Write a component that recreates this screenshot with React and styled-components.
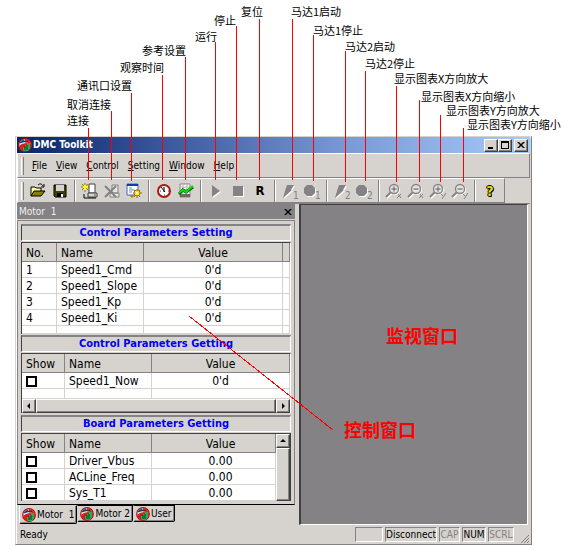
import React from "react";
import styled, { createGlobalStyle, css } from "styled-components";

const face = "#d6d3ce";
const shade = "#848284";
const ui = `"DejaVu Sans Condensed", "Noto Sans", sans-serif`;
const cjk = `"Noto Sans CJK SC", sans-serif`;

const GlobalStyle = createGlobalStyle`
  *, *::before, *::after { box-sizing: border-box; }
  body { margin: 0; background: #fff; font-family: ${ui}; color: #000; }
  button { font: inherit; color: inherit; }
`;

const raised = css`
  border: 1px solid;
  border-color: #fff #424142 #424142 #fff;
  box-shadow: inset -1px -1px 0 ${shade};
`;

const Figure = styled.div`
  position: relative;
  padding: 136px 32px 5px 15px;
`;

const Leaders = styled.svg`
  position: absolute;
  left: 0;
  top: 0;
  width: 100%;
  height: 100%;
  pointer-events: none;
  stroke: #f00;
  shape-rendering: crispEdges;
`;

const Callout = styled.span`
  position: absolute;
  left: ${(p) => p.$x}px;
  top: ${(p) => p.$y}px;
  white-space: nowrap;
  font-family: ${cjk};
  font-size: ${(p) => (p.$big ? 18 : 11)}px;
  line-height: ${(p) => (p.$big ? 20 : 12)}px;
  font-weight: ${(p) => (p.$big ? 700 : 400)};
  color: ${(p) => (p.$big ? "#f00" : "#000")};
`;

const Window = styled.main`
  background: ${face};
  border: 1px solid;
  border-color: ${face} ${shade} ${shade} ${face};
  box-shadow: inset 1px 1px 0 #fff;
  padding: 0 1px 0 1px;
`;

const TitleBar = styled.header`
  display: flex;
  align-items: center;
  height: 16px;
  padding: 0 2px 0 1px;
  gap: 1px;
  background: linear-gradient(90deg, #08246b, #7b9ad6 65%, #a5cbf7);
`;

const Title = styled.h1`
  flex: 1;
  margin: 0;
  font-size: 10px;
  line-height: 16px;
  font-weight: 700;
  color: #fff;
`;

const CaptionButtons = styled.div`
  display: flex;
`;

const CaptionButton = styled.button`
  ${raised}
  width: 14px;
  height: 13px;
  padding: 0;
  margin-left: ${(p) => (p.$apart ? 2 : 0)}px;
  background: ${face};
  display: grid;
  place-items: center;
`;

const Bar = styled.div`
  display: flex;
  align-items: center;
  height: ${(p) => p.$height}px;
  padding-left: 3px;
  border: 1px solid;
  border-color: #fff ${shade} ${shade} #fff;
`;

const Grip = styled.span`
  width: 3px;
  height: 18px;
  margin-right: ${(p) => p.$after}px;
  border-left: 1px solid #fff;
  border-right: 1px solid ${shade};
`;

const Menu = styled.nav`
  display: flex;
  gap: 9px;
`;

const MenuItem = styled.button`
  border: 0;
  padding: 0;
  background: none;
  font-size: 10px;
  line-height: 16px;
`;

const ToolbarRow = styled.div`
  display: flex;
  padding-right: 25px;
  border-bottom: 1px solid ${shade};
  & > * { flex: 1; }
`;

const Tool = styled.button`
  width: 22px;
  height: 22px;
  padding: 0;
  border: 0;
  background: none;
  display: grid;
  place-items: center;
`;

const Separator = styled.span`
  width: 2px;
  height: 22px;
  margin: 0 3px;
  border-left: 1px solid ${shade};
  border-right: 1px solid #fff;
`;

const Workspace = styled.div`
  display: flex;
  padding-right: 2px;
`;

const Pane = styled.section`
  flex: 0 0 282px;
  padding-right: 4px;
  display: flex;
  flex-direction: column;
`;

const PaneTitle = styled.header`
  display: flex;
  align-items: center;
  justify-content: space-between;
  height: 15px;
  padding: 0 2px;
  background: ${shade};
  color: #efefef;
  font-size: 10px;
  line-height: 15px;
`;

const PaneClose = styled.button`
  width: 10px;
  height: 10px;
  padding: 0;
  border: 0;
  background: none;
  color: #000;
  display: grid;
  place-items: center;
`;

const Groups = styled.div`
  margin-top: 1px;
  padding: 3px 3px 3px 3px;
  display: flex;
  flex-direction: column;
  gap: 1px;
  border: 1px solid;
  border-color: ${shade} ${shade} #000 ${shade};
`;

const GroupTitle = styled.h2`
  height: 17px;
  margin: 0;
  border: 1px solid;
  border-top-width: 2px;
  border-color: ${shade} #fff #fff #424142;
  text-align: center;
  font-size: 11px;
  line-height: 14px;
  font-weight: 700;
  color: #0000f7;
`;

const Sheet = styled.div`
  display: flex;
  flex-direction: ${(p) => (p.$row ? "row" : "column")};
  margin-bottom: ${(p) => p.$after || 0}px;
  border-top: 1px solid #424142;
  border-left: 1px solid #424142;
  border-right: 1px solid ${(p) => (p.$row ? "#424142" : "#fff")};
  background: #fff;
`;

const Grid = styled.table`
  flex: 1;
  width: 100%;
  table-layout: fixed;
  border-collapse: separate;
  border-spacing: 0;
  font-size: 12px;
  line-height: 13px;
`;

const Col = styled.col`
  width: ${(p) => (p.$w ? `${p.$w}px` : "auto")};
`;

const Head = styled.th`
  height: 19px;
  padding: 2px 4px 0 ${(p) => (p.$shift ? 18 : 4)}px;
  background: ${face};
  border-right: 1px solid ${shade};
  border-bottom: 1px solid ${shade};
  font-weight: 400;
  text-align: ${(p) => (p.$center ? "center" : "left")};
`;

const Cell = styled.td`
  height: ${(p) => p.$h || 16}px;
  padding: ${(p) => (p.$h ? 0 : 2)}px 4px 0 ${(p) => (p.$shift ? 18 : 4)}px;
  border-right: 1px solid ${face};
  border-bottom: 1px solid ${face};
  white-space: nowrap;
  text-align: ${(p) => (p.$center ? "center" : "left")};
`;

const Check = styled.input`
  appearance: none;
  display: block;
  width: 11px;
  height: 11px;
  margin: 0;
  border: 2px solid #000;
  background: #fff;
`;

const Scroll = styled.div`
  display: flex;
  flex-direction: ${(p) => (p.$vertical ? "column" : "row")};
  flex: 0 0 14px;
  background: #efebe7;
`;

const ScrollButton = styled.button`
  ${raised}
  flex: 0 0 14px;
  height: 14px;
  padding: 0;
  background: ${face};
  display: grid;
  place-items: center;
`;

const Thumb = styled.span`
  ${raised}
  flex: 1;
  background: ${face};
`;

const Tabs = styled.div`
  display: flex;
  align-items: flex-start;
  height: 20px;
  padding-left: 2px;
`;

const Tab = styled.button`
  display: flex;
  align-items: center;
  gap: 1px;
  height: ${(p) => (p.$active ? 19 : 17)}px;
  padding: 0 2px;
  border: 1px solid #000;
  border-top-color: ${(p) => (p.$active ? face : "#000")};
  border-left-color: ${(p) => (p.$active ? "#fff" : face)};
  border-radius: 0 0 2px 2px;
  box-shadow: inset -1px -1px 0 ${shade};
  background: ${face};
  font-size: 10px;
  line-height: 14px;
  white-space: pre;
`;

const Monitor = styled.section`
  flex: 1;
  background: ${shade};
  border: 1px solid;
  border-color: #424142 #fff #fff #424142;
  border-left-width: 2px;
`;

const StatusBar = styled.footer`
  display: flex;
  align-items: center;
  gap: 2px;
  height: 19px;
  padding-left: 3px;
  font-size: 10px;
  line-height: 13px;
`;

const Ready = styled.span`
  flex: 1;
`;

const StatusCell = styled.span`
  width: ${(p) => p.$w}px;
  height: 15px;
  border: 1px solid;
  border-color: ${shade} #fff #fff ${shade};
  text-align: center;
  white-space: nowrap;
  color: ${(p) => (p.$off ? shade : "#000")};
`;

const SizeGrip = styled.svg`
  align-self: flex-end;
  margin-left: 4px;
`;

const leaders = [
  [88, 128, 180], [111, 111, 180], [131, 93, 181], [162, 75, 180],
  [185, 57, 180], [215, 42, 180], [236, 26, 180], [259, 19, 180],
  [292, 19, 180], [313, 35, 181], [345, 51, 182], [365, 71, 181],
  [396, 86, 182], [419, 100, 182], [440, 115, 182], [463, 128, 182],
];

const callouts = [
  ["连接", 67, 114], ["取消连接", 67, 98], ["通讯口设置", 77, 79],
  ["观察时间", 120, 61], ["参考设置", 142, 44], ["运行", 195, 30],
  ["停止", 214, 14], ["复位", 241, 5], ["马达1启动", 291, 5],
  ["马达1停止", 313, 24], ["马达2启动", 345, 40], ["马达2停止", 365, 57],
  ["显示图表X方向放大", 394, 72], ["显示图表X方向缩小", 421, 90],
  ["显示图表Y方向放大", 446, 104], ["显示图表Y方向缩小", 467, 118],
];

const Logo = ({ size = 14 }) => (
  <svg width={size} height={size} viewBox="0 0 14 14" aria-hidden="true">
    <circle cx="7" cy="7" r="6.3" fill="#d8e8f0" stroke="#b01010" strokeWidth="1.2" />
    <path d="M2 5A6 6 0 0 1 6 1L7 4 4 5z" fill="#2878d8" />
    <path d="M7 1A6 6 0 0 1 13 7L10 5 7 4z" fill="#e02020" />
    <path d="M1 8L4 6 8 5 13 6V9L10 13H4z" fill="#e01818" />
    <path d="M5 12V9h2V7h2V5h3v5l-2 3H6z" fill="#20b058" />
    <path d="M2 5l3-2 3 1 2-1M7 8v4M9 7v5" stroke="#083820" fill="none" />
  </svg>
);

const Icon = ({ children }) => (
  <svg width="20" height="20" viewBox="0 0 20 20" fill="none" aria-hidden="true">{children}</svg>
);

const OpenIcon = () => (
  <Icon>
    <path d="M3 15V6h4l1 1h5v3" fill="#ffff9c" stroke="#000" />
    <path d="M3 15l3-5h11l-4 5z" fill="#848200" stroke="#000" />
    <path d="M10 4c2-2 4-1 5 1M16 3v3h-3" stroke="#000" />
  </Icon>
);
const SaveIcon = () => (
  <Icon>
    <path d="M4 4h12v12H5l-1-1z" fill="#424100" stroke="#000" />
    <path d="M6 4h8v6H6z" fill="#d6d3ce" />
    <path d="M7 12h6v4H7z" fill="#000" /><path d="M11 13h2v3h-2z" fill="#fff" />
  </Icon>
);
const ConnectIcon = () => (
  <Icon>
    <path d="M9 3h6v9H9z" fill="#fff" stroke="#424142" />
    <path d="M8 12h9v4H8z" fill="#d6d3ce" stroke="#424142" />
    <path d="M14 14h2" stroke="#00a000" />
    <path d="M4 13v4h12" stroke="#000" />
    <path d="M5 2v9M1 6h9M2 3l6 6M8 3L2 9" stroke="#848200" />
    <path d="M5 4v5M3 6h5" stroke="#ffff00" strokeWidth="2" />
  </Icon>
);
const DisconnectIcon = () => (
  <Icon>
    <path d="M10 4h6v8h-6zM8 12h9v4H8z" fill="#e8e6e2" stroke="#848284" />
    <path d="M3 5l11 11M14 5L3 16" stroke="#848284" strokeWidth="2" />
  </Icon>
);
const PortIcon = () => (
  <Icon>
    <path d="M3 3h11v11H3z" fill="#fff" stroke="#4264c8" />
    <path d="M3 4h11" stroke="#1038b8" strokeWidth="2" />
    <path d="M5 7h3M5 9h6M5 11h3" stroke="#6b86d0" />
    <path d="M13 8v9M9 12h9M10 9l6 7M16 9l-6 7" stroke="#9a7800" />
    <circle cx="13" cy="12" r="3" fill="#ffe030" stroke="#9a7800" />
    <circle cx="13" cy="12" r="1" fill="#fff" />
    <path d="M8 14v3M6 15h4" stroke="#9a7800" />
  </Icon>
);
const ClockIcon = () => (
  <Icon>
    <circle cx="10" cy="10" r="6" fill="#fff" stroke="#a51818" strokeWidth="2" />
    <path d="M7 6l4 5M10 6v5" stroke="#000" />
    <path d="M10 14h1M6 10h1M14 10h1" stroke="#424142" />
  </Icon>
);
const ChartIcon = () => (
  <Icon>
    <path d="M4 3h10v13H4z" fill="#fff" stroke="#848284" />
    <path d="M4 6h10M4 9h10M7 3v13M11 3v13" stroke="#b5b2ad" />
    <path d="M4 13h10v3H4z" fill="#6b6963" />
    <path d="M3 13l4-4 3 2 7-5" stroke="#084808" strokeWidth="3" />
    <path d="M3 12l4-3 3 2 7-6" stroke="#00e800" strokeWidth="2" />
  </Icon>
);
const PlayIcon = () => (
  <Icon><path d="M7 5l8 6-8 6z" fill="#fff" /><path d="M6 4l8 6-8 6z" fill={shade} /></Icon>
);
const StopIcon = () => (
  <Icon><path d="M6 6h10v10H6z" fill="#fff" /><path d="M5 5h10v10H5z" fill={shade} /></Icon>
);

const ToolLetter = styled.span`
  font-size: 13px;
  line-height: 20px;
  font-weight: 700;
`;

const HelpMark = styled(ToolLetter)`
  font-size: 14px;
  color: #e8e000;
  text-shadow: 1px 0 #000, -1px 0 #000, 0 1px #000, 0 -1px #000, 1px 1px #000;
`;

const Digit = styled.text`
  font-family: ${ui};
  font-size: 10px;
  fill: ${shade};
`;

const BoltIcon = ({ n }) => (
  <Icon>
    <path d="M8 5h7l-3 5h1L4 18l2-7 2-6z" fill="#fff" />
    <path d="M7 4h7l-3 5h1L3 17l2-7 2-6z" fill={shade} />
    <Digit x="13" y="18">{n}</Digit>
  </Icon>
);
const MotorIcon = ({ n }) => (
  <Icon>
    <path d="M6 5h5l3 3v5l-3 3H6l-3-3V8z" fill="#fff" />
    <path d="M5 4h5l3 3v5l-3 3H5l-3-3V7z" fill={shade} />
    <Digit x="13" y="18">{n}</Digit>
  </Icon>
);
const ZoomIcon = ({ plus, axis }) => (
  <Icon>
    <g stroke="#fff"><circle cx="11" cy="9" r="4.5" /><path d="M8 12l-5 5" strokeWidth="2" /></g>
    <g stroke={shade}>
      <circle cx="10" cy="8" r="4.5" fill="#e4e2de" strokeWidth="1.3" />
      <path d="M7 11l-5 5" strokeWidth="2" />
      <path d={plus ? "M7.5 8h5M10 5.5v5" : "M7.5 8h5"} strokeWidth="1.5" />
      <path d={axis === "x" ? "M14 13l3 4M17 13l-4 4" : "M13 13l2 2M18 12l-4 6"} />
    </g>
  </Icon>
);

const Arrow = ({ d }) => (
  <svg width="8" height="8" viewBox="0 0 8 8" aria-hidden="true"><path d={d} fill="#000" /></svg>
);

const tools = [
  [["Open", <OpenIcon />], ["Save", <SaveIcon />]],
  [["Connect", <ConnectIcon />], ["Disconnect", <DisconnectIcon />], ["Port settings", <PortIcon />]],
  [["Watch time", <ClockIcon />], ["Reference settings", <ChartIcon />]],
  [["Run", <PlayIcon />], ["Stop", <StopIcon />], ["Reset", <ToolLetter>R</ToolLetter>]],
  [["Start motor 1", <BoltIcon n="1" />], ["Stop motor 1", <MotorIcon n="1" />]],
  [["Start motor 2", <BoltIcon n="2" />], ["Stop motor 2", <MotorIcon n="2" />]],
  [
    ["Zoom in X", <ZoomIcon plus axis="x" />], ["Zoom out X", <ZoomIcon axis="x" />],
    ["Zoom in Y", <ZoomIcon plus axis="y" />], ["Zoom out Y", <ZoomIcon axis="y" />],
  ],
  [["Help", <HelpMark>?</HelpMark>]],
];

const menus = ["File", "View", "Control", "Setting", "Window", "Help"];

const SettingTable = () => (
  <Grid>
    <colgroup><Col $w={35} /><Col $w={87} /><Col /><Col $w={7} /></colgroup>
    <thead>
      <tr><Head>No.</Head><Head>Name</Head><Head $center>Value</Head><Head as="td" /></tr>
    </thead>
    <tbody>
      {["Speed1_Cmd", "Speed1_Slope", "Speed1_Kp", "Speed1_Ki"].map((name, i) => (
        <tr key={name}><Cell>{i + 1}</Cell><Cell>{name}</Cell><Cell $center>0'd</Cell><Cell /></tr>
      ))}
      <tr><Cell $h={8} /><Cell $h={8} /><Cell $h={8} /><Cell $h={8} /></tr>
    </tbody>
  </Grid>
);

const WatchTable = ({ rows, spare, shift }) => (
  <Grid>
    <colgroup><Col $w={43} /><Col $w={87} /><Col /></colgroup>
    <thead>
      <tr><Head>Show</Head><Head>Name</Head><Head $center $shift={shift}>Value</Head></tr>
    </thead>
    <tbody>
      {rows.map(([name, value]) => (
        <tr key={name}>
          <Cell><Check type="checkbox" aria-label={`Show ${name}`} /></Cell>
          <Cell>{name}</Cell>
          <Cell $center $shift={shift}>{value}</Cell>
        </tr>
      ))}
      {spare && <tr><Cell $h={10} /><Cell $h={10} /><Cell $h={10} /></tr>}
    </tbody>
  </Grid>
);

export default function App() {
  return (
    <Figure>
      <GlobalStyle />
      <Window>
        <TitleBar>
          <Logo />
          <Title>DMC Toolkit</Title>
          <CaptionButtons>
            <CaptionButton aria-label="Minimize"><Arrow d="M1 6h5v2H1z" /></CaptionButton>
            <CaptionButton aria-label="Maximize"><Arrow d="M0 0h8v8H0zM1 2v5h6V2z" /></CaptionButton>
            <CaptionButton aria-label="Close" $apart>
              <Arrow d="M0 1h2l2 2 2-2h2L5 4l3 3H6L4 5 2 7H0l3-3z" />
            </CaptionButton>
          </CaptionButtons>
        </TitleBar>
        <Bar $height={25}>
          <Grip $after={8} />
          <Menu>
            {menus.map((m) => (
              <MenuItem key={m}><u>{m[0]}</u>{m.slice(1)}</MenuItem>
            ))}
          </Menu>
        </Bar>
        <ToolbarRow>
          <Bar $height={25} role="toolbar">
            <Grip $after={3} />
            {tools.map((group, i) => (
              <React.Fragment key={i}>
                {i > 0 && <Separator />}
                {group.map(([name, icon]) => <Tool key={name} aria-label={name}>{icon}</Tool>)}
              </React.Fragment>
            ))}
          </Bar>
        </ToolbarRow>
        <Workspace>
          <Pane>
            <PaneTitle>
              <span>Motor&nbsp; 1</span>
              <PaneClose aria-label="Close panel">
                <Arrow d="M0 1h2l2 2 2-2h2L5 4l3 3H6L4 5 2 7H0l3-3z" />
              </PaneClose>
            </PaneTitle>
            <Groups>
              <GroupTitle>Control Parameters Setting</GroupTitle>
              <Sheet><SettingTable /></Sheet>
              <GroupTitle>Control Parameters Getting</GroupTitle>
              <Sheet $after={1}>
                <WatchTable rows={[["Speed1_Now", "0'd"]]} spare />
                <Scroll>
                  <ScrollButton aria-label="Scroll left"><Arrow d="M5 1v6L2 4z" /></ScrollButton>
                  <Thumb />
                  <ScrollButton aria-label="Scroll right"><Arrow d="M3 1v6l3-3z" /></ScrollButton>
                </Scroll>
              </Sheet>
              <GroupTitle>Board Parameters Getting</GroupTitle>
              <Sheet $row>
                <WatchTable
                  shift
                  rows={[["Driver_Vbus", "0.00"], ["ACLine_Freq", "0.00"], ["Sys_T1", "0.00"]]}
                />
                <Scroll $vertical>
                  <ScrollButton aria-label="Scroll up"><Arrow d="M1 5h6L4 2z" /></ScrollButton>
                  <Thumb />
                </Scroll>
              </Sheet>
            </Groups>
            <Tabs role="tablist">
              <Tab role="tab" aria-selected="true" $active><Logo />{"Motor  1"}</Tab>
              <Tab role="tab"><Logo />Motor 2</Tab>
              <Tab role="tab"><Logo />User</Tab>
            </Tabs>
          </Pane>
          <Monitor aria-label="Monitor" />
        </Workspace>
        <StatusBar>
          <Ready>Ready</Ready>
          <StatusCell $w={28} />
          <StatusCell $w={52}>Disconnect</StatusCell>
          <StatusCell $w={21} $off>CAP</StatusCell>
          <StatusCell $w={24}>NUM</StatusCell>
          <StatusCell $w={26} $off>SCRL</StatusCell>
          <SizeGrip width="10" height="10" viewBox="0 0 10 10" aria-hidden="true">
            <path d="M1 9l8-8M4 9l5-5M7 9l2-2" stroke={shade} />
          </SizeGrip>
        </StatusBar>
      </Window>
      <Leaders aria-hidden="true">
        {leaders.map(([x, top, bottom]) => (
          <path key={x} d={`M${x + 0.5} ${top}V${bottom}`} />
        ))}
        <path d="M189 316L333 430" />
      </Leaders>
      {callouts.map(([text, x, y]) => (
        <Callout key={text} $x={x} $y={y}>{text}</Callout>
      ))}
      <Callout $big $x={386} $y={325}>监视窗口</Callout>
      <Callout $big $x={344} $y={419}>控制窗口</Callout>
    </Figure>
  );
}
